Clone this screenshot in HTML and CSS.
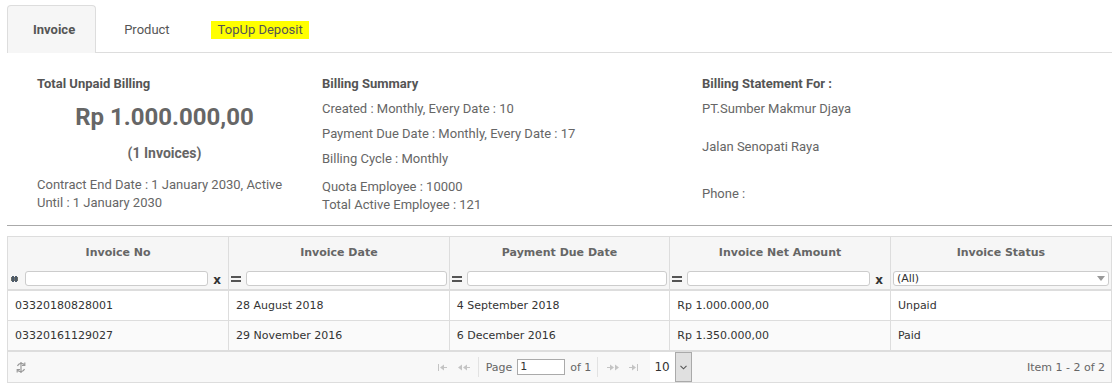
FILE: index.html
```html
<!DOCTYPE html>
<html lang="en">
<head>
  <meta charset="UTF-8">
  <meta name="viewport" content="width=device-width, initial-scale=1.0">
  <title>Billing</title>
  <link rel="stylesheet" href="styles.css">
</head>
<body>
  <div class="page">
    <div class="tabs">
      <div class="tab active">Invoice</div>
      <div class="tab tab-product">Product</div>
      <div class="tab tab-topup"><span class="mark">TopUp Deposit</span></div>
    </div>

    <div class="summary">
      <div class="col">
        <div class="label">Total Unpaid Billing</div>
        <div class="amount">Rp 1.000.000,00</div>
        <div class="count">(1 Invoices)</div>
        <p class="contract">Contract End Date : 1 January 2030, Active Until : 1 January 2030</p>
      </div>
      <div class="col">
        <div class="label">Billing Summary</div>
        <p class="line">Created : Monthly, Every Date : 10</p>
        <p class="line">Payment Due Date : Monthly, Every Date : 17</p>
        <p class="line">Billing Cycle : Monthly</p>
        <p class="line line-quota">Quota Employee : 10000<br>Total Active Employee : 121</p>
      </div>
      <div class="col">
        <div class="label">Billing Statement For :</div>
        <p class="line">PT.Sumber Makmur Djaya</p>
        <p class="line line-address">Jalan Senopati Raya</p>
        <p class="line line-phone">Phone :</p>
      </div>
    </div>

    <div class="grid">
      <table>
        <thead>
          <tr>
            <th>
              <div class="th-title">Invoice No</div>
              <div class="th-filter">
                <svg class="f-icon" width="7" height="6" viewBox="0 0 7 6"><rect x="0" y="1" width="7" height="4" fill="#6b6f66"/><rect x="1" y="0" width="2" height="6" fill="#4d5a6a"/><rect x="4" y="0" width="2" height="6" fill="#4d5a6a"/></svg>
                <span class="f-input"></span>
                <span class="f-clear">x</span>
              </div>
            </th>
            <th>
              <div class="th-title">Invoice Date</div>
              <div class="th-filter">
                <span class="f-eq"></span>
                <span class="f-input"></span>
              </div>
            </th>
            <th>
              <div class="th-title">Payment Due Date</div>
              <div class="th-filter">
                <span class="f-eq"></span>
                <span class="f-input"></span>
              </div>
            </th>
            <th>
              <div class="th-title">Invoice Net Amount</div>
              <div class="th-filter">
                <span class="f-eq"></span>
                <span class="f-input"></span>
                <span class="f-clear">x</span>
              </div>
            </th>
            <th>
              <div class="th-title">Invoice Status</div>
              <div class="th-filter">
                <span class="f-select">(All)<span class="caret"></span></span>
              </div>
            </th>
          </tr>
        </thead>
        <tbody>
          <tr>
            <td>03320180828001</td>
            <td>28 August 2018</td>
            <td>4 September 2018</td>
            <td>Rp 1.000.000,00</td>
            <td>Unpaid</td>
          </tr>
          <tr class="alt">
            <td>03320161129027</td>
            <td>29 November 2016</td>
            <td>6 December 2016</td>
            <td>Rp 1.350.000,00</td>
            <td>Paid</td>
          </tr>
        </tbody>
      </table>

      <div class="pager">
        <div class="pager-left">
          <svg width="12" height="13" viewBox="0 0 12 13" fill="none" stroke="#9a9a9a" stroke-width="1.2">
            <path d="M9.5 4 A4 4 0 0 0 2.5 5"/>
            <path d="M2.5 9 A4 4 0 0 0 9.5 8"/>
            <path d="M9.8 1.5 V4.3 H7"/>
            <path d="M2.2 11.5 V8.7 H5"/>
            <path d="M6 1 V12"/>
          </svg>
        </div>
        <div class="pager-nav">
          <svg class="nav" width="10" height="7" viewBox="0 0 10 7"><rect x="0" y="0" width="1" height="7" fill="#c4c4c4"/><path d="M2 3.5 L6 0.5 V6.5 Z" fill="#c4c4c4"/><rect x="6" y="3" width="3" height="1" fill="#c4c4c4"/></svg>
          <svg class="nav" width="12" height="7" viewBox="0 0 12 7"><path d="M0 3.5 L4 0.5 V6.5 Z M5 3.5 L9 0.5 V6.5 Z" fill="#c4c4c4"/><rect x="9" y="3" width="3" height="1" fill="#c4c4c4"/></svg>
          <span class="sep"></span>
          <span class="pg-text">Page</span>
          <span class="pg-input">1</span>
          <span class="pg-text">of 1</span>
          <span class="sep"></span>
          <svg class="nav" width="12" height="7" viewBox="0 0 12 7"><rect x="0" y="3" width="3" height="1" fill="#c4c4c4"/><path d="M3 0.5 L7 3.5 L3 6.5 Z M8 0.5 L12 3.5 L8 6.5 Z" fill="#c4c4c4"/></svg>
          <svg class="nav" width="10" height="7" viewBox="0 0 10 7"><rect x="0" y="3" width="3" height="1" fill="#c4c4c4"/><path d="M3 0.5 L7 3.5 L3 6.5 Z" fill="#c4c4c4"/><rect x="8" y="0" width="1" height="7" fill="#c4c4c4"/></svg>
          <span class="size">
            <span class="size-val">10</span>
            <span class="size-btn">
              <svg width="7" height="5" viewBox="0 0 7 5" fill="none" stroke="#555" stroke-width="1.1"><path d="M0.5 0.8 L3.5 3.8 L6.5 0.8"/></svg>
            </span>
          </span>
        </div>
        <div class="pager-info">Item 1 - 2 of 2</div>
      </div>
    </div>
  </div>
</body>
</html>
```

FILE: styles.css
```css
body {
  margin: 0;
  background-color: white;
  font-family: Roboto, "Noto Sans", sans-serif;
  color: #666;
}
.page {
  padding: 0 8px 0 7px;
}

/* tabs */
.tabs {
  display: flex;
  padding-top: 5px;
  border-bottom: 1px solid #ddd;
  font-size: 13px;
}
.tab {
  height: 47px;
  line-height: 47px;
  padding: 0 20px 0 25px;
  margin-right: 2px;
  margin-bottom: -1px;
  border: 1px solid transparent;
  border-bottom: 0;
  color: #555;
}
.tab.active {
  background-color: #f6f6f6;
  border-color: #ddd;
  border-radius: 4px 4px 0 0;
  font-weight: bold;
}
.tab-topup {
  padding-left: 17px;
}
.mark {
  background-color: #ffff00;
  padding: 1px 6px 2px 7px;
  color: #555;
}

/* summary */
.summary {
  display: grid;
  grid-template-columns: 255px 350px 1fr;
  column-gap: 30px;
  padding: 22px 0 11px 30px;
  border-bottom: 1px solid #aaa;
  font-size: 13px;
  line-height: 18px;
}
.label {
  font-weight: bold;
  color: #555;
}
.amount {
  margin-top: 9px;
  font-size: 24px;
  line-height: 30px;
  font-weight: bold;
  text-align: center;
  color: #666;
}
.count {
  margin-top: 11px;
  font-size: 14px;
  line-height: 20px;
  font-weight: bold;
  text-align: center;
  color: #666;
}
.contract {
  margin: 13px 0 0;
}
.line {
  margin: 7px 0 0;
}
.line-quota {
  margin-top: 10px;
}
.line-address {
  margin-top: 20px;
}
.line-phone {
  margin-top: 29px;
}

/* grid */
.grid {
  margin-top: 10px;
  border: 1px solid #ddd;
  font-family: "DejaVu Sans", Verdana, sans-serif;
  font-size: 11px;
}
table {
  width: 100%;
  border-collapse: collapse;
  table-layout: fixed;
}
th {
  padding: 0;
  background-color: #f6f6f6;
  border-left: 1px solid #ddd;
  border-bottom: 2px solid #ddd;
  color: #666;
  font-weight: bold;
}
th:first-child,
td:first-child {
  border-left: 0;
}
.th-title {
  height: 31px;
  line-height: 31px;
  text-align: center;
}
.th-filter {
  display: flex;
  align-items: center;
  gap: 5px;
  height: 21px;
  padding: 0 2px 0 2px;
}
.f-icon {
  margin: 0 2px 0 1px;
}
.f-input {
  flex: 1;
  height: 13px;
  background-color: white;
  border: 1px solid #ccc;
  border-radius: 3px;
}
.f-clear {
  font-size: 12px;
  color: #333;
  margin: 2px 5px 0 0;
}
.f-eq {
  width: 10px;
  height: 2px;
  border-top: 2px solid #555;
  border-bottom: 2px solid #555;
}
.f-select {
  flex: 1;
  position: relative;
  height: 13px;
  line-height: 13px;
  padding-left: 3px;
  background-color: white;
  border: 1px solid #ccc;
  border-radius: 3px;
  text-align: left;
  font-weight: normal;
  color: #333;
}
.caret {
  position: absolute;
  right: 3px;
  top: 4px;
  border-left: 4px solid transparent;
  border-right: 4px solid transparent;
  border-top: 5px solid #999;
}
td {
  height: 29px;
  padding: 0 7px;
  border-left: 1px solid #ddd;
  border-top: 1px solid #ddd;
  color: #333;
  white-space: nowrap;
}
tbody tr:first-child td {
  border-top: 0;
}
tr.alt td {
  background-color: #fafafa;
}

/* pager */
.pager {
  display: grid;
  grid-template-columns: 1fr auto 1fr;
  align-items: center;
  height: 30px;
  border-top: 2px solid #ddd;
  background-color: #f8f8f8;
  color: #666;
}
.pager-left {
  display: flex;
  align-items: center;
  padding-left: 7px;
}
.pager-nav {
  display: flex;
  align-items: center;
  height: 30px;
  margin-left: 6px;
}
.nav {
  margin: 0 5px;
}
.sep {
  width: 1px;
  height: 20px;
  background-color: #e2e2e2;
  margin: 0 4px 0 3px;
}
.pg-text {
  margin: 0 3px;
}
.pg-input {
  width: 44px;
  height: 14px;
  line-height: 14px;
  padding-left: 2px;
  margin: 0 2px;
  background-color: white;
  border: 1px solid #aaa;
  color: #333;
}
.size {
  display: flex;
  height: 30px;
  margin-left: 6px;
}
.size-val {
  width: 21px;
  padding-left: 4px;
  line-height: 30px;
  background-color: white;
  color: #333;
  font-size: 12px;
}
.size-btn {
  display: flex;
  align-items: center;
  justify-content: center;
  width: 15px;
  background-color: #e0e0e0;
  border: 1px solid #aaa;
  height: 28px;
}
.pager-info {
  text-align: right;
  padding-right: 6px;
}
```
